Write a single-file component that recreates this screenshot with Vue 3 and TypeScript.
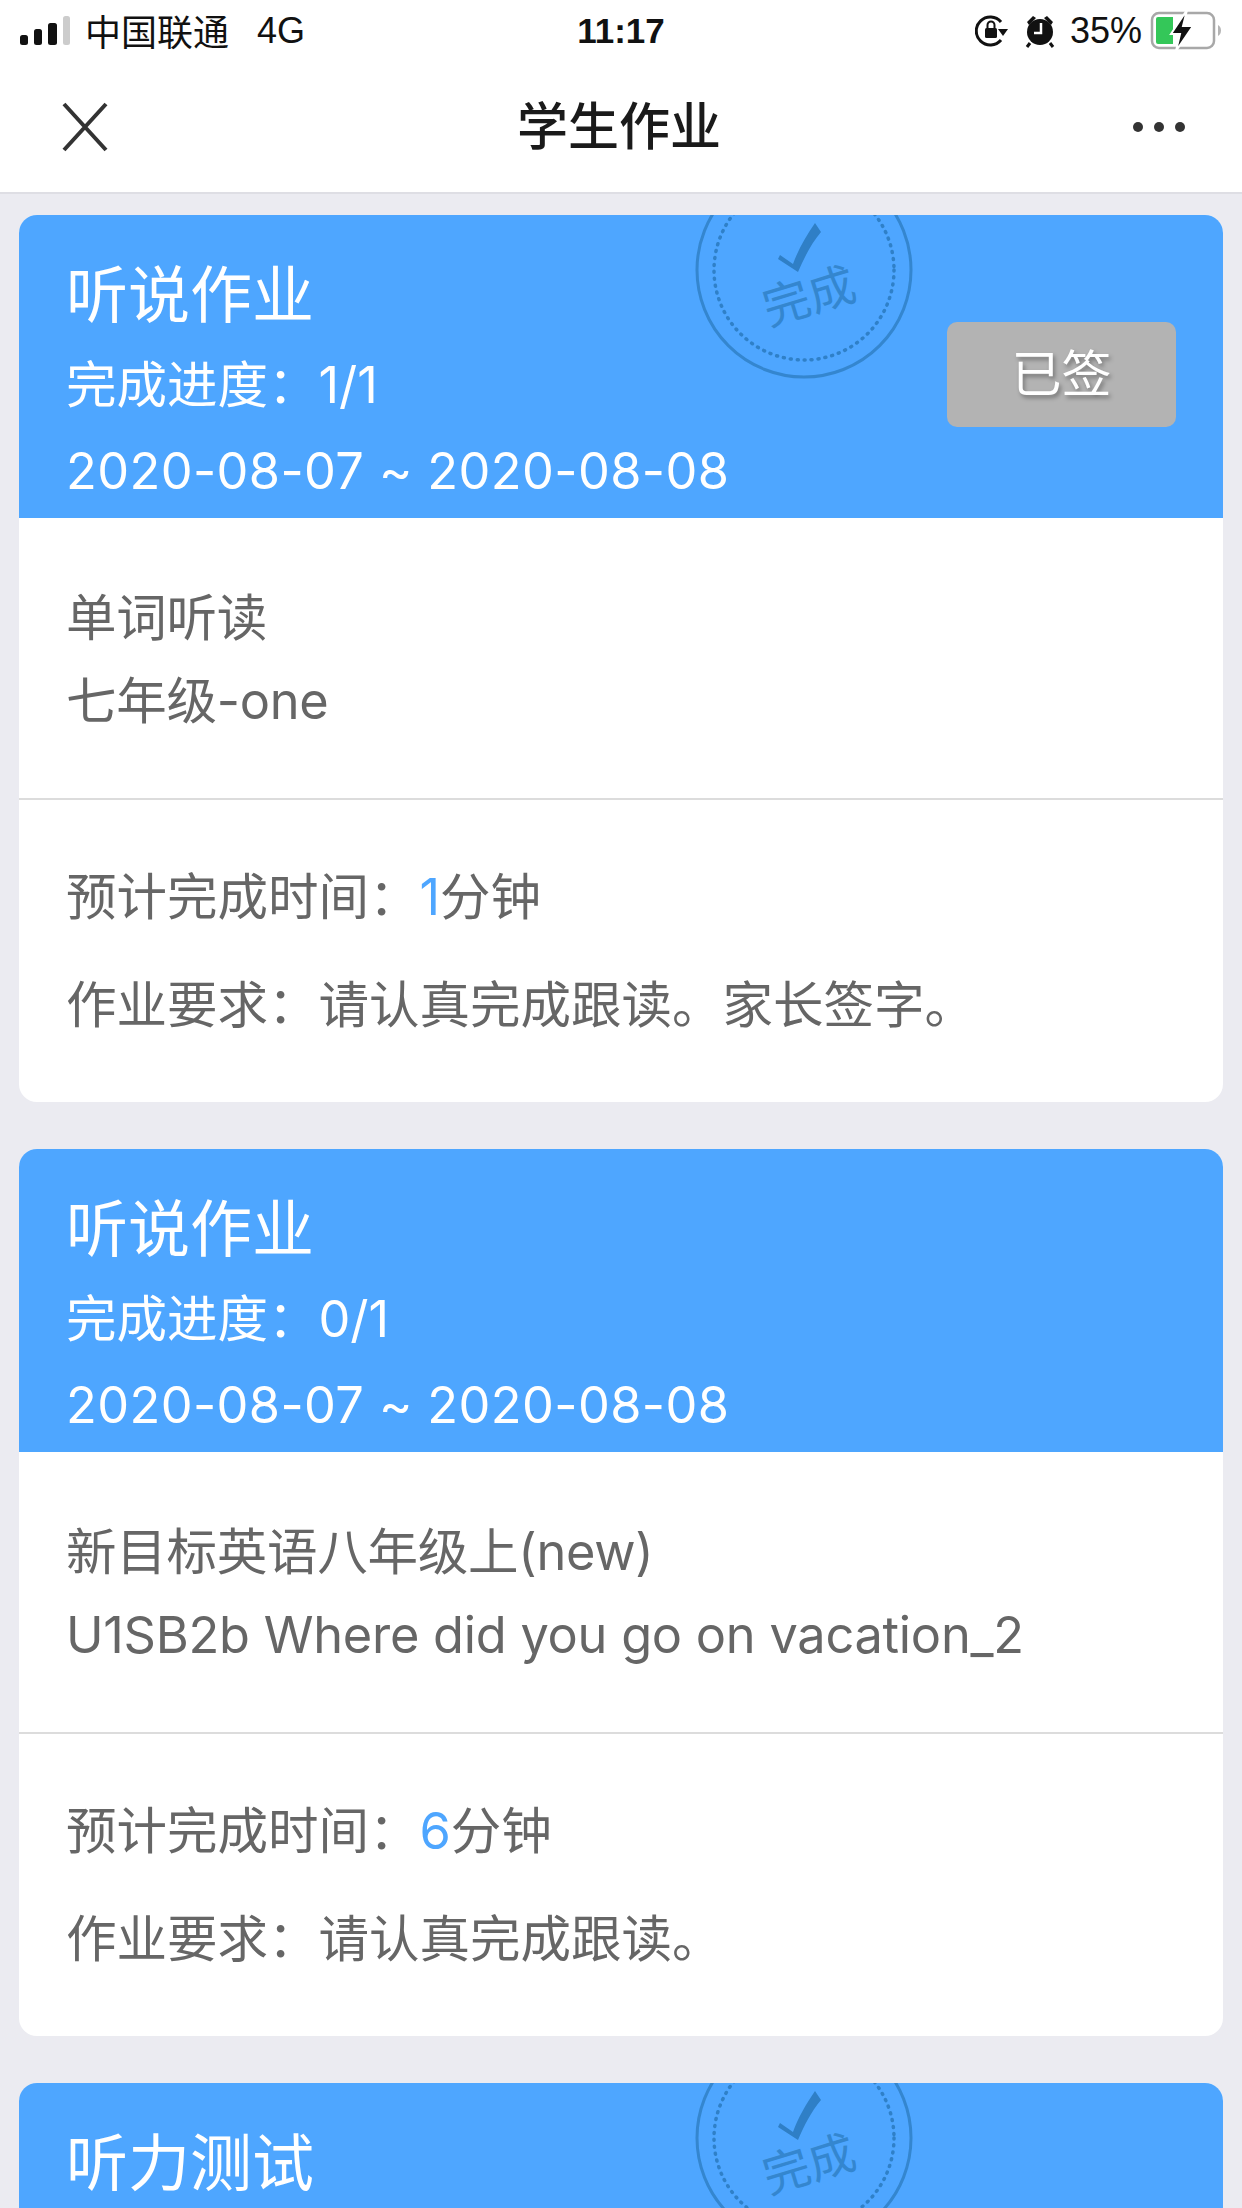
<template>
  <div class="page">
    <div class="status-bar">
      <div class="status-left">
        <svg class="signal" width="52" height="30" viewBox="0 0 52 30">
          <rect x="0" y="19" width="8" height="10" rx="2.5" fill="#111" />
          <rect x="14" y="13" width="8" height="16" rx="2.5" fill="#111" />
          <rect x="28" y="7" width="9" height="22" rx="2.5" fill="#111" />
          <rect x="43" y="0" width="7" height="29" rx="2.5" fill="#ccc" />
        </svg>
        <span class="carrier">中国联通</span>
        <span class="net">4G</span>
      </div>
      <div class="status-time">11:17</div>
      <div class="status-right">
        <svg width="34" height="36" viewBox="0 0 34 36">
          <path d="M26 9 A14 14 0 1 0 26 27" fill="none" stroke="#111" stroke-width="3" />
          <path d="M23 16 L33 16 L28 23 Z" fill="#111" />
          <rect x="10" y="15" width="12" height="10" rx="1.5" fill="#111" />
          <path d="M12.5 15 V12 a3.5 3.5 0 0 1 7 0 V15" fill="none" stroke="#111" stroke-width="2" />
        </svg>
        <svg class="alarm" width="30" height="36" viewBox="0 0 30 36">
          <circle cx="15" cy="19" r="13" fill="#111" />
          <path d="M2 9 L8 3 L11 5 L4 12 Z M28 9 L22 3 L19 5 L26 12 Z" fill="#111" />
          <path d="M5 30 L2 34 M25 30 L28 34" stroke="#111" stroke-width="3" />
          <path d="M16 10 V20 H9" fill="none" stroke="#fff" stroke-width="2.5" />
        </svg>
        <span class="percent">35%</span>
        <svg width="72" height="42" viewBox="0 0 72 42">
          <rect x="2" y="3" width="62" height="35" rx="7" fill="none" stroke="#a8a8a8" stroke-width="2.5" />
          <path d="M6 9 a2 2 0 0 1 2-2 H23 V34 H8 a2 2 0 0 1-2-2 Z" fill="#34c759" />
          <path d="M68 15 a5 6 0 0 1 0 11 Z" fill="#b5b5b5" />
          <path d="M37 0 L21 24 H30 L26 41 L43 16 H33 Z" fill="#111" stroke="#fff" stroke-width="2" />
        </svg>
      </div>
    </div>

    <div class="nav-bar">
      <svg class="nav-close" width="46" height="52" viewBox="0 0 46 52">
        <path d="M2 3 L44 49 M44 3 L2 49" stroke="#333" stroke-width="4" />
      </svg>
      <div class="nav-title">学生作业</div>
      <div class="nav-more"><i></i><i></i><i></i></div>
    </div>

    <div class="list">
      <div v-for="item in homework" :key="item.id" class="card">
        <div class="card-head">
          <svg v-if="item.done" class="stamp" width="220" height="220" viewBox="0 0 220 220">
            <circle cx="110" cy="110" r="107" fill="none" stroke="#3486cf" stroke-width="3" />
            <circle cx="110" cy="110" r="90" fill="none" stroke="#2f80c8" stroke-width="3.5" stroke-dasharray="1 6" stroke-linecap="round" />
            <path d="M86 95 L99 104 C104 90 112 76 121 63 L127 72 C117 84 110 98 104 112 L84 99 Z" fill="#2f7fc6" />
            <text x="0" y="0" class="stamp-text" transform="translate(75 166) rotate(-17)">完成</text>
          </svg>
          <div class="head-title">{{ item.title }}</div>
          <div class="head-line">完成进度：{{ item.progress }}</div>
          <div class="head-line head-date">2020-08-07 ~ 2020-08-08</div>
          <div v-if="item.signed" class="signed">已签</div>
        </div>
        <div class="card-body">
          <div class="body-line">{{ item.book }}</div>
          <div class="body-line">{{ item.unit }}</div>
        </div>
        <div class="card-foot">
          <div class="foot-line">预计完成时间：<span class="num">{{ item.minutes }}</span>分钟</div>
          <div class="foot-line">作业要求：{{ item.note }}</div>
        </div>
      </div>
    </div>
  </div>
</template>

<script setup lang="ts">
interface Homework {
  id: number
  title: string
  progress: string
  done: boolean
  signed: boolean
  book: string
  unit: string
  minutes: number
  note: string
}

const homework: Homework[] = [
  {
    id: 1,
    title: '听说作业',
    progress: '1/1',
    done: true,
    signed: true,
    book: '单词听读',
    unit: '七年级-one',
    minutes: 1,
    note: '请认真完成跟读。家长签字。'
  },
  {
    id: 2,
    title: '听说作业',
    progress: '0/1',
    done: false,
    signed: false,
    book: '新目标英语八年级上(new)',
    unit: 'U1SB2b Where did you go on vacation_2',
    minutes: 6,
    note: '请认真完成跟读。'
  },
  {
    id: 3,
    title: '听力测试',
    progress: '1/1',
    done: true,
    signed: false,
    book: '',
    unit: '',
    minutes: 1,
    note: ''
  }
]
</script>

<style scoped>
.page {
  width: 1242px;
  height: 2208px;
  overflow: hidden;
  background: #ebebf1;
  font-family: "Liberation Sans", "Noto Sans CJK SC", sans-serif;
}

/* Status bar */
.status-bar {
  height: 62px;
  padding: 0 20px;
  display: flex;
  align-items: center;
  justify-content: space-between;
  background: #fff;
  color: #111;
  font-size: 36px;
  position: relative;
}

.status-left,
.status-right {
  display: flex;
  align-items: center;
}

.signal {
  margin-right: 13px;
}

.carrier {
  margin-top: -2px;
}

.net {
  margin-left: 28px;
}

.status-time {
  position: absolute;
  left: 0;
  right: 0;
  text-align: center;
  font-size: 35px;
  font-weight: 700;
  pointer-events: none;
}

.alarm {
  margin-left: 16px;
}

.percent {
  margin: 0 8px 0 15px;
}

/* Nav */
.nav-bar {
  height: 130px;
  padding: 0 57px 0 62px;
  display: flex;
  align-items: center;
  justify-content: space-between;
  background: #fff;
  border-bottom: 2px solid #dedee4;
  position: relative;
}

.nav-title {
  position: absolute;
  left: 0;
  right: 4px;
  top: 31px;
  text-align: center;
  font-size: 51px;
  line-height: 70px;
  font-weight: 500;
  color: #1a1a1a;
}

.nav-more {
  display: flex;
  gap: 11px;
}

.nav-more i {
  width: 10px;
  height: 10px;
  border-radius: 50%;
  background: #333;
}

/* Cards */
.list {
  padding: 21px 19px 0;
}

.card {
  margin-bottom: 47px;
  border-radius: 18px;
  overflow: hidden;
  background: #fff;
  font-family: Inter, "Noto Sans CJK SC", sans-serif;
}

.card-head {
  position: relative;
  height: 303px;
  box-sizing: border-box;
  padding: 35px 47px 0;
  overflow: hidden;
  background: #4ea6ff;
  color: #fff;
}

.head-title {
  font-size: 62px;
  line-height: 92px;
}

.head-line {
  font-size: 50.5px;
  line-height: 86px;
}

.head-date {
  letter-spacing: 0.4px;
}

.stamp {
  position: absolute;
  left: 675px;
  top: -55px;
}

.stamp-text {
  font-size: 47px;
  fill: #3486cf;
}

.signed {
  position: absolute;
  left: 928px;
  top: 107px;
  width: 229px;
  height: 105px;
  border-radius: 10px;
  background: #b3b3b3;
  font-size: 50px;
  line-height: 105px;
  text-align: center;
  text-shadow: 2px 3px 4px rgba(0, 0, 0, 0.35);
}

.card-body {
  padding: 58px 47px 56px;
  border-bottom: 2px solid #dcdcdc;
  color: #666;
  font-size: 50.5px;
  letter-spacing: -0.25px;
  line-height: 83px;
}

.body-line {
  min-height: 83px;
}

.card-foot {
  padding: 43px 47px;
  color: #666;
  font-size: 50.5px;
  line-height: 108px;
}

.foot-line {
  min-height: 108px;
}

.num {
  color: #4ea6ff;
}
</style>
